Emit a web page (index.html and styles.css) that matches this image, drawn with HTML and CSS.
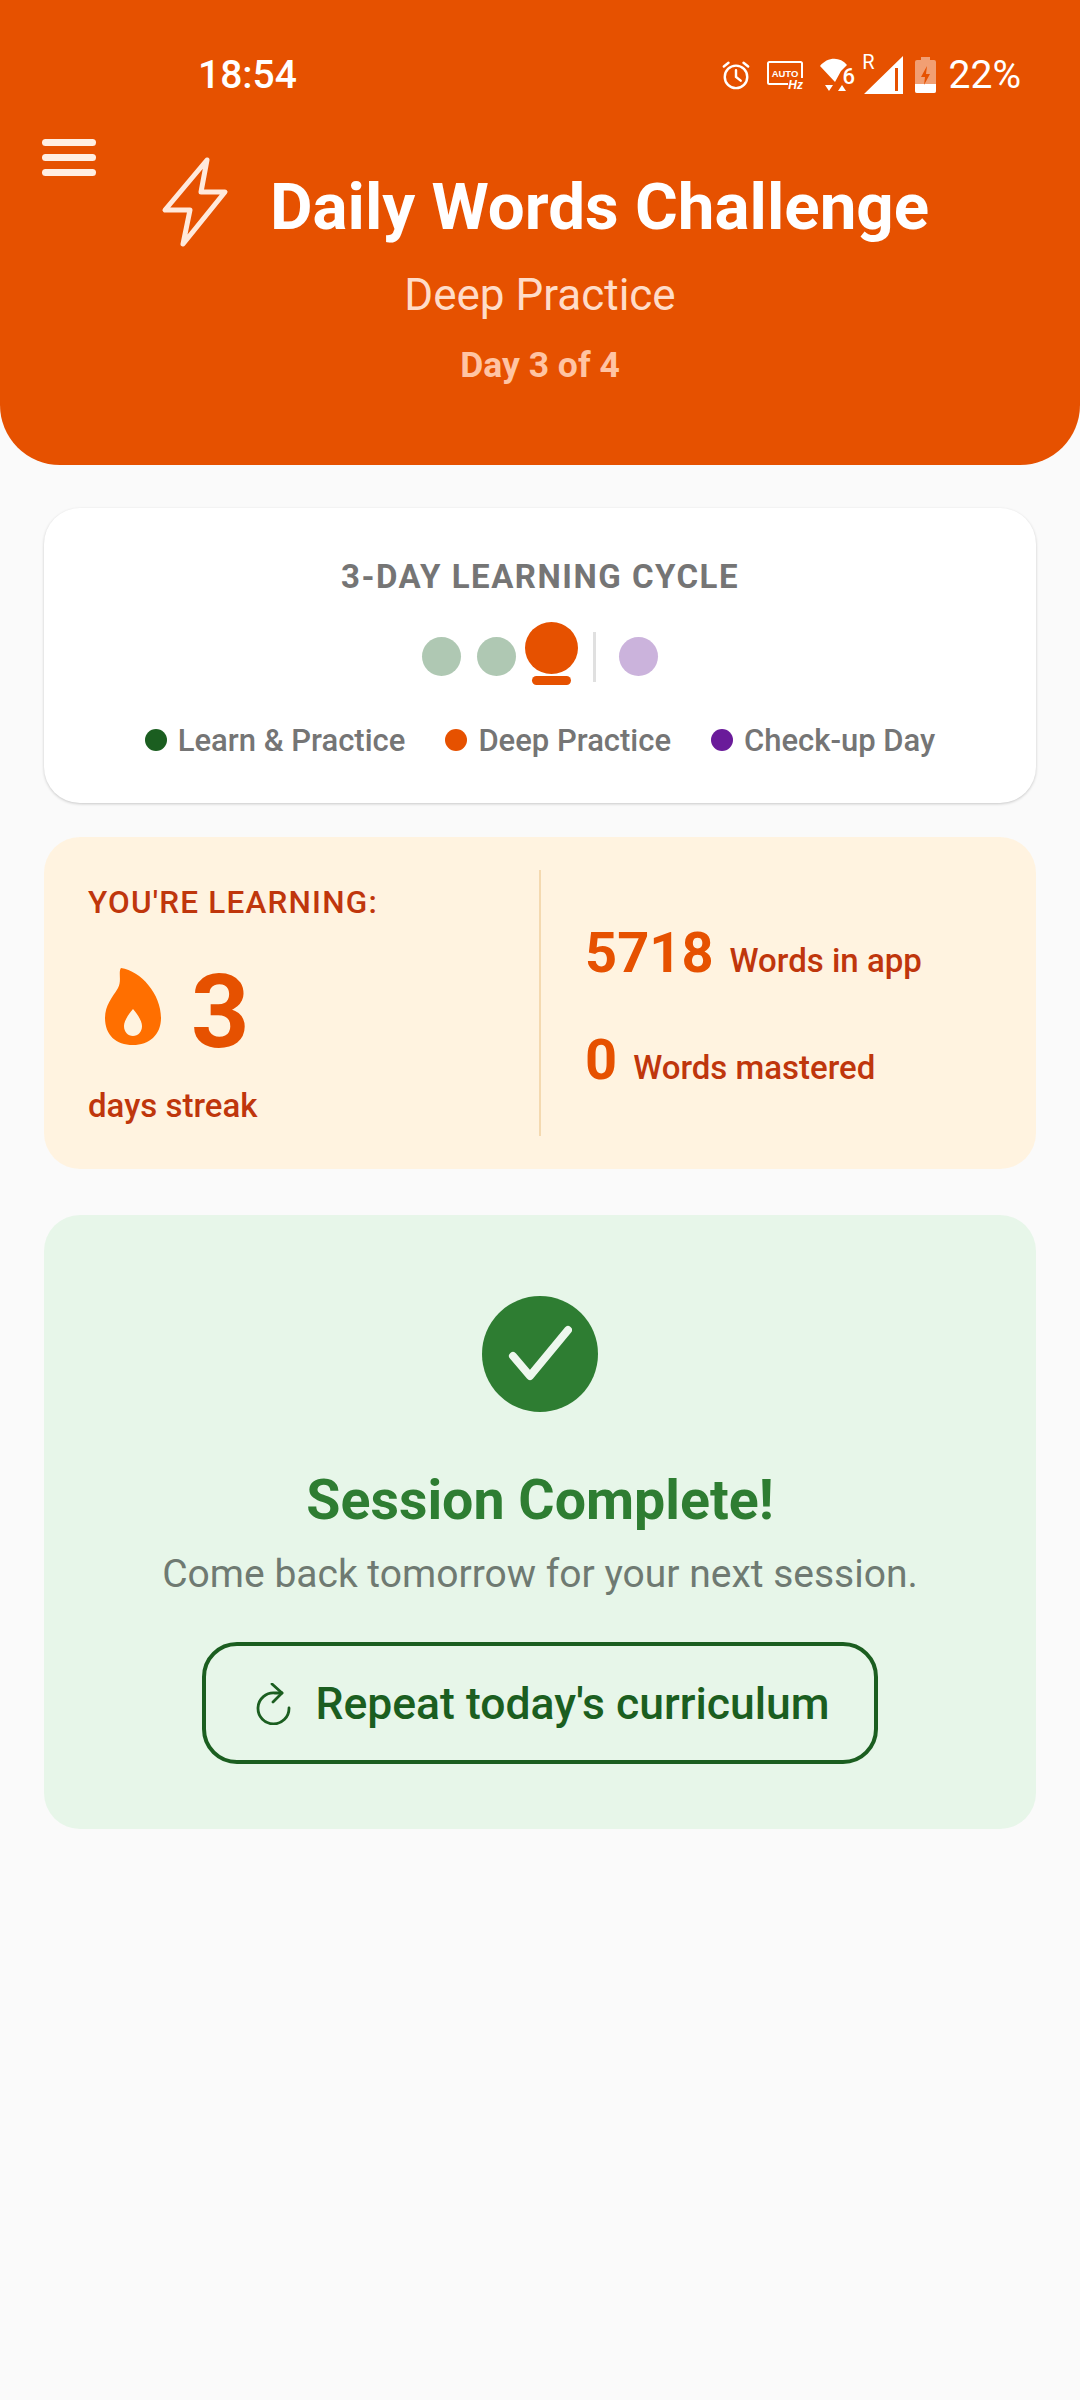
FILE: index.html
```html
<!DOCTYPE html>
<html lang="en">
<head>
  <meta charset="UTF-8">
  <title>Daily Words Challenge</title>
  <link rel="stylesheet" href="styles.css">
</head>
<body>

  <header class="header">
    <div class="status-bar">
      <span class="status-time">18:54</span>
      <div class="status-icons">
        <svg class="icon-alarm" width="30" height="30" viewBox="0 0 32 32" fill="none" stroke="#fff" stroke-width="2.6" stroke-linecap="round">
          <circle cx="16" cy="18" r="12"/>
          <path d="M16 11v7l5 4M3 7l5-4M29 7l-5-4"/>
        </svg>
        <svg class="icon-auto" width="36" height="29" viewBox="0 0 36 29">
          <path d="M21 23H2.500A1.500 1.500 0 0 1 1 21.500V2.500A1.500 1.500 0 0 1 2.500 1H33.500A1.500 1.500 0 0 1 35 2.500V17" fill="none" stroke="#fff" stroke-width="2"/>
          <text x="18" y="15.500" text-anchor="middle" class="auto-text">AUTO</text>
          <text x="36" y="28" text-anchor="end" class="hz-text">Hz</text>
        </svg>
        <svg class="icon-wifi" width="36" height="35" viewBox="0 0 36 35">
          <path d="M1 8C8-1 21-2 28 7L22 13L16 24Z" fill="#fff"/>
          <path d="M6 27h8l-4 6ZM19 33h8l-4-6Z" fill="#fff"/>
          <text x="36" y="26" text-anchor="end" class="wifi-text">6</text>
        </svg>
        <span class="status-r">R</span>
        <svg class="icon-signal" width="39" height="38" viewBox="0 0 39 38">
          <path d="M39 0V38H0ZM34 12h-3v23h3Z" fill="#fff" fill-rule="evenodd"/>
        </svg>
        <svg class="icon-battery" width="21" height="36" viewBox="0 0 21 36">
          <path d="M6 0h9v3h4a2 2 0 0 1 2 2v29a2 2 0 0 1-2 2H2a2 2 0 0 1-2-2V5a2 2 0 0 1 2-2h4Z" fill="#fff" fill-opacity=".45"/>
          <path d="M0 27h21v7a2 2 0 0 1-2 2H2a2 2 0 0 1-2-2Z" fill="#fff"/>
          <path d="M12 9l-6 11h4l-1 8 6-11h-4Z" fill="#E65100"/>
        </svg>
        <span class="status-battery">22%</span>
      </div>
    </div>

    <div class="header-top">
      <div class="menu-btn">
        <span></span>
        <span></span>
        <span></span>
      </div>
      <div class="title-row">
        <svg class="title-bolt" width="70" height="90" viewBox="0 0 70 90" fill="none" stroke="#FFE9DC" stroke-width="5" stroke-linejoin="round">
          <path d="M47 3L5 53H30L23 87L65 35H41Z"/>
        </svg>
        <h1>Daily Words Challenge</h1>
      </div>
    </div>
    <p class="subtitle">Deep Practice</p>
    <p class="day-count">Day 3 of 4</p>
  </header>

  <main class="content">

    <section class="card cycle-card">
      <h2>3-DAY LEARNING CYCLE</h2>
      <div class="cycle-dots">
        <span class="dot dot-learn"></span>
        <span class="dot dot-learn"></span>
        <span class="dot-current">
          <span class="dot-big"></span>
          <span class="dot-bar"></span>
        </span>
        <span class="cycle-divider"></span>
        <span class="dot dot-check"></span>
      </div>
      <div class="legend">
        <span class="legend-item"><i class="legend-dot green"></i>Learn &amp; Practice</span>
        <span class="legend-item"><i class="legend-dot orange"></i>Deep Practice</span>
        <span class="legend-item"><i class="legend-dot purple"></i>Check-up Day</span>
      </div>
    </section>

    <section class="card stats-card">
      <div class="streak">
        <div class="streak-label">YOU'RE LEARNING:</div>
        <div class="streak-count">
          <svg class="streak-flame" width="60" height="78" viewBox="0 0 60 78">
            <path fill-rule="evenodd" fill="#FF6F00" d="M18 0C38 3 58 26 58 50C58 67 46 77 30 77C13 77 2 67 2 50C2 37 9 30 15 20C19 13 15 4 18 0ZM30 41C25 47 21 53 21 58C21 64 25 68 30 68C35 68 39 64 39 58C39 53 35 47 30 41Z"/>
          </svg>
          <span class="streak-num">3</span>
        </div>
        <div class="streak-text">days streak</div>
      </div>
      <div class="stats-divider"></div>
      <div class="totals">
        <div class="total-row"><span class="total-num">5718</span><span class="total-text">Words in app</span></div>
        <div class="total-row"><span class="total-num">0</span><span class="total-text">Words mastered</span></div>
      </div>
    </section>

    <section class="card done-card">
      <div class="done-check">
        <svg width="64" height="60" viewBox="0 0 64 60" fill="none" stroke="#EEF7EE" stroke-width="8" stroke-linecap="round" stroke-linejoin="round">
          <path d="M5 32L22 52L60 6"/>
        </svg>
      </div>
      <h2>Session Complete!</h2>
      <p>Come back tomorrow for your next session.</p>
      <button class="repeat-btn">
        <svg width="38" height="42" viewBox="0 0 38 42" fill="none" stroke="#1B5E20" stroke-width="2.8" stroke-linecap="round" stroke-linejoin="round">
          <path d="M28 10H21A15.500 15.500 0 1 0 35 25"/>
          <path d="M18 1L28 10L19 19"/>
        </svg>
        Repeat today's curriculum
      </button>
    </section>

  </main>

</body>
</html>
```

FILE: styles.css
```css
* {
  box-sizing: border-box;
}

body {
  margin: 0;
  width: 1080px;
  height: 2400px;
  background-color: #fafafa;
  font-family: Roboto, "Liberation Sans", sans-serif;
}

h1, h2, p {
  margin: 0;
}

.header {
  height: 465px;
  padding: 48px 42px 0;
  background-color: #e65100;
  border-radius: 0 0 60px 60px;
  text-align: center;
}

.status-bar {
  display: flex;
  justify-content: space-between;
  align-items: center;
  height: 54px;
  padding: 0 17px 0 156px;
  color: #fff;
}

.status-time {
  font-size: 39px;
  font-weight: 500;
}

.status-icons {
  display: flex;
  align-items: center;
}

.icon-auto {
  margin-left: 16px;
  overflow: visible;
}

.icon-wifi {
  margin-left: 16px;
  overflow: visible;
}

.auto-text {
  font-family: "Liberation Sans", sans-serif;
  font-size: 9.5px;
  font-weight: 700;
  fill: #fff;
}

.hz-text {
  font-family: "Liberation Sans", sans-serif;
  font-size: 12px;
  font-weight: 700;
  font-style: italic;
  fill: #fff;
}

.wifi-text {
  font-size: 22px;
  font-weight: 500;
  fill: #fff;
}

.status-r {
  margin-left: 7px;
  font-size: 20px;
  line-height: 20px;
  align-self: flex-start;
}

.icon-signal {
  margin-left: -11px;
}

.icon-battery {
  margin-left: 12px;
}

.status-battery {
  font-size: 39px;
  margin-left: 13px;
}

.header-top {
  display: flex;
  align-items: flex-start;
  margin-top: 34px;
}

.menu-btn {
  display: flex;
  flex-direction: column;
  gap: 8px;
  width: 54px;
  margin-top: 3px;
  margin-right: 64px;
}

.menu-btn span {
  height: 7px;
  background-color: #ffeee2;
  border-radius: 4px;
}

.title-row {
  display: flex;
  align-items: center;
  gap: 40px;
  margin-top: 30px;
}

.title-bolt {
  margin-top: -9px;
}

.title-row h1 {
  font-size: 65.5px;
  font-weight: 700;
  color: #fff;
  line-height: 74px;
}

.subtitle {
  margin-top: 23px;
  font-size: 44px;
  line-height: 50px;
  color: #ffdcc8;
}

.day-count {
  margin-top: 25px;
  font-size: 35.5px;
  font-weight: 700;
  line-height: 40px;
  color: #ffc4a3;
}

.content {
  display: flex;
  flex-direction: column;
  padding: 43px 44px 0;
}

.card {
  border-radius: 36px;
}

.cycle-card {
  height: 295px;
  padding-top: 51px;
  background-color: #fff;
  box-shadow: 0 1px 3px rgba(0,0,0,0.2);
  text-align: center;
}

.cycle-card h2 {
  font-size: 33px;
  font-weight: 700;
  line-height: 36px;
  letter-spacing: 1.5px;
  color: #757575;
}

.cycle-dots {
  display: flex;
  justify-content: center;
  align-items: flex-start;
  height: 64px;
  margin-top: 27px;
}

.dot {
  width: 39px;
  height: 39px;
  margin-top: 15px;
  border-radius: 50%;
}

.dot-learn {
  margin-right: 16px;
  background-color: #afc8b3;
}

.dot-learn + .dot-learn {
  margin-right: 9px;
}

.dot-check {
  background-color: #cbb3dc;
}

.dot-current {
  display: flex;
  flex-direction: column;
  align-items: center;
  width: 53px;
}

.dot-big {
  width: 53px;
  height: 52px;
  border-radius: 50%;
  background-color: #e65100;
}

.dot-bar {
  width: 39px;
  height: 9px;
  margin-top: 2px;
  border-radius: 5px;
  background-color: #e65100;
}

.cycle-divider {
  width: 3px;
  height: 50px;
  margin: 10px 23px 0 15px;
  background-color: #e0e0e0;
}

.legend {
  display: flex;
  justify-content: center;
  gap: 40px;
  margin-top: 37px;
}

.legend-item {
  display: flex;
  align-items: center;
  font-size: 31px;
  font-weight: 500;
  line-height: 36px;
  color: #757575;
}

.legend-dot {
  width: 22px;
  height: 22px;
  margin-right: 11px;
  margin-top: -2px;
  border-radius: 50%;
}

.legend-dot.green {
  background-color: #1b5e20;
}

.legend-dot.orange {
  background-color: #e65100;
}

.legend-dot.purple {
  background-color: #6a1b9a;
}

.stats-card {
  display: flex;
  height: 332px;
  margin-top: 34px;
  background-color: #fff3e0;
}

.streak {
  width: 495px;
  padding: 48px 0 0 44px;
}

.streak-label {
  font-size: 31.5px;
  font-weight: 500;
  line-height: 36px;
  letter-spacing: 1.2px;
  color: #bf360c;
}

.streak-count {
  display: flex;
  align-items: center;
  gap: 28px;
  margin-top: 36px;
  padding-left: 15px;
}

.streak-flame {
  margin-bottom: 5px;
}

.streak-num {
  padding-top: 5px;
  font-size: 102px;
  font-weight: 700;
  line-height: 100px;
  color: #e65100;
}

.streak-text {
  margin-top: 25px;
  font-size: 33px;
  font-weight: 500;
  line-height: 38px;
  color: #bf360c;
}

.stats-divider {
  width: 2px;
  height: 266px;
  margin-top: 33px;
  background-color: #f4d9b0;
}

.totals {
  display: flex;
  flex-direction: column;
  gap: 47px;
  padding: 86px 0 0 44px;
}

.total-row {
  display: flex;
  align-items: baseline;
  gap: 16px;
}

.total-num {
  font-size: 56px;
  font-weight: 700;
  line-height: 60px;
  color: #e65100;
}

.total-text {
  font-size: 33px;
  font-weight: 500;
  color: #bf360c;
}

.done-card {
  display: flex;
  flex-direction: column;
  align-items: center;
  height: 614px;
  margin-top: 46px;
  padding-top: 81px;
  background-color: #e7f6e9;
}

.done-check {
  display: flex;
  justify-content: center;
  align-items: center;
  width: 116px;
  height: 116px;
  border-radius: 50%;
  background-color: #2e7d32;
}

.done-card h2 {
  margin-top: 57px;
  font-size: 55.5px;
  font-weight: 700;
  line-height: 64px;
  color: #2e7d32;
}

.done-card p {
  margin-top: 18px;
  font-size: 39px;
  line-height: 46px;
  color: #6f7a72;
}

.repeat-btn {
  display: flex;
  align-items: center;
  justify-content: center;
  gap: 23px;
  width: 676px;
  height: 122px;
  margin-top: 45px;
  padding: 2px 0 0 4px;
  background-color: #e7f6e9;
  border: 4px solid #1b5e20;
  border-radius: 35px;
  font-family: Roboto, "Liberation Sans", sans-serif;
  font-size: 44.5px;
  font-weight: 500;
  color: #1b5e20;
}
```
